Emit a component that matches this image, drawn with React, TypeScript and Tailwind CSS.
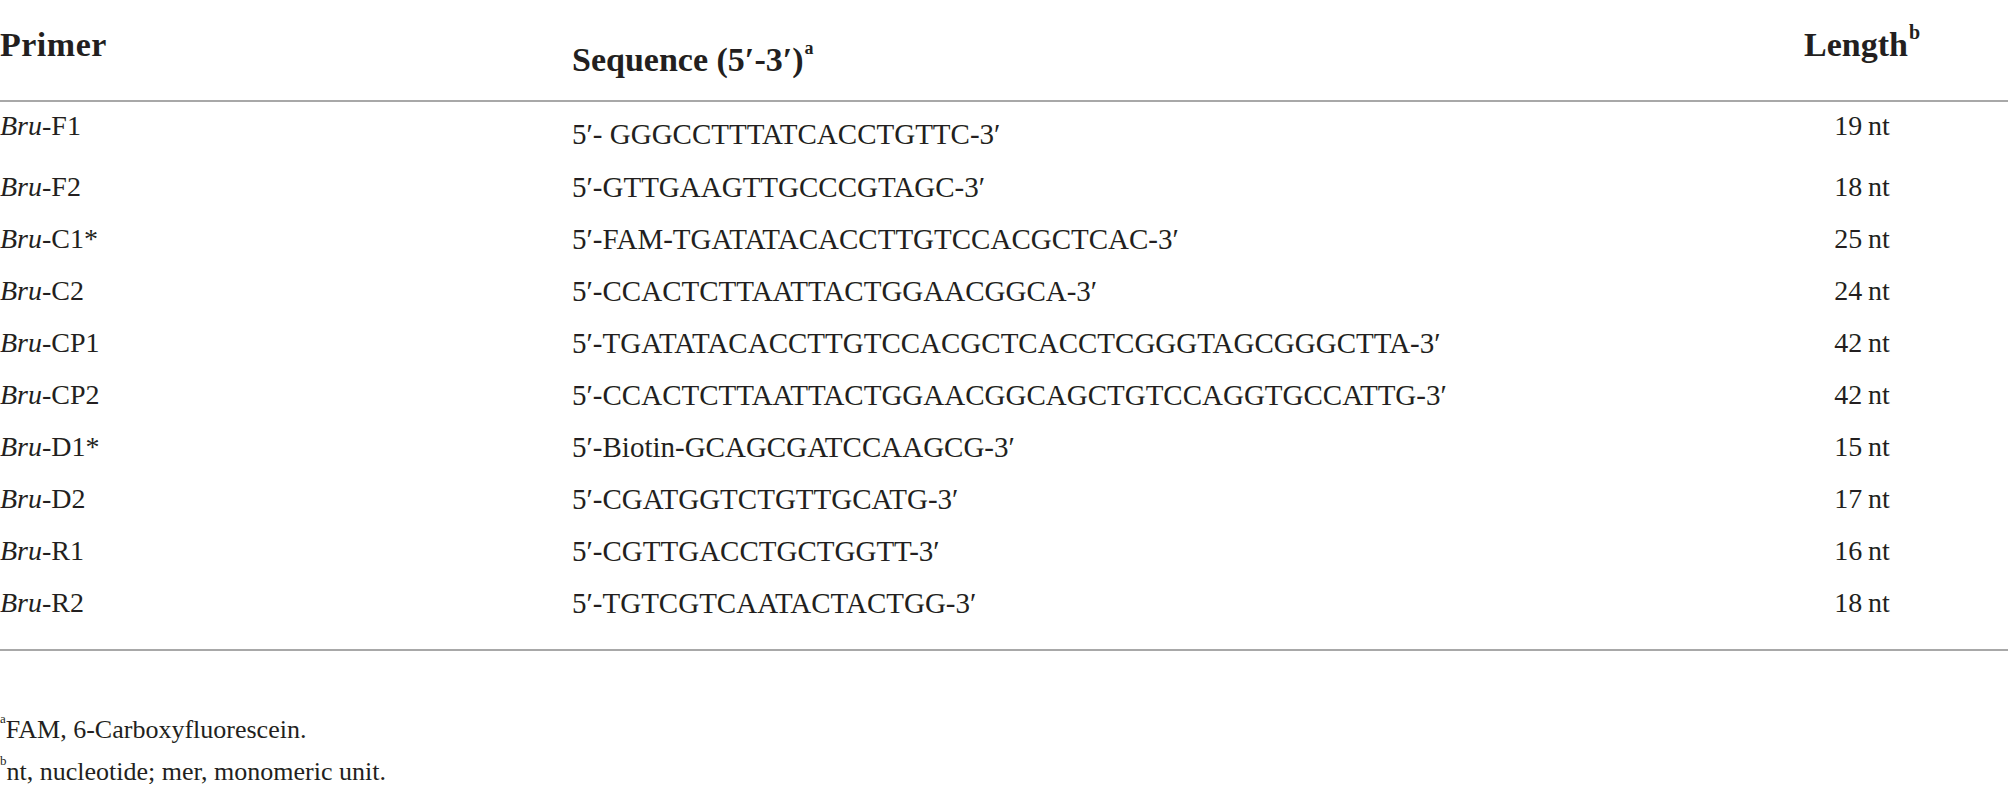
import React from "react";

const rows: { name: string; seq: string; len: string }[] = [
  { name: "F1", seq: "5\u2032- GGGCCTTTATCACCTGTTC-3\u2032", len: "19" },
  { name: "F2", seq: "5\u2032-GTTGAAGTTGCCCGTAGC-3\u2032", len: "18" },
  { name: "C1*", seq: "5\u2032-FAM-TGATATACACCTTGTCCACGCTCAC-3\u2032", len: "25" },
  { name: "C2", seq: "5\u2032-CCACTCTTAATTACTGGAACGGCA-3\u2032", len: "24" },
  { name: "CP1", seq: "5\u2032-TGATATACACCTTGTCCACGCTCACCTCGGGTAGCGGGCTTA-3\u2032", len: "42" },
  { name: "CP2", seq: "5\u2032-CCACTCTTAATTACTGGAACGGCAGCTGTCCAGGTGCCATTG-3\u2032", len: "42" },
  { name: "D1*", seq: "5\u2032-Biotin-GCAGCGATCCAAGCG-3\u2032", len: "15" },
  { name: "D2", seq: "5\u2032-CGATGGTCTGTTGCATG-3\u2032", len: "17" },
  { name: "R1", seq: "5\u2032-CGTTGACCTGCTGGTT-3\u2032", len: "16" },
  { name: "R2", seq: "5\u2032-TGTCGTCAATACTACTGG-3\u2032", len: "18" },
];

export default function App() {
  return (
    <div
      className="w-[2008px] h-[794px] bg-white text-[#231f20] overflow-hidden"
      style={{ fontFamily: '"Liberation Serif", "Times New Roman", serif' }}
    >
      {/* Header */}
      <div className="grid grid-cols-[572px_1144px_292px] h-[100px] font-bold text-[34px] leading-[40px]">
        <div className="pt-[25px] tracking-[0.5px]">Primer</div>
        <div className="pt-[40px]">
          Sequence (5{"\u2032"}-3{"\u2032"})
          <sup className="text-[18px] font-bold align-[8px] ml-[1px]">a</sup>
        </div>
        <div className="pt-[25px] text-center">
          Length
          <sup className="text-[20px] font-bold align-[7px] ml-[1px]">b</sup>
        </div>
      </div>
      <div className="h-[2px] bg-[#a8a8a8]" />

      {/* Body */}
      <div className="text-[28px] leading-[34px]">
        {rows.map((r, i) => (
          <div
            key={r.name}
            className={
              i === 0
                ? "grid grid-cols-[572px_1144px_292px] h-[62px] pt-[7px]"
                : "grid grid-cols-[572px_1144px_292px] h-[52px] pt-[6px]"
            }
          >
            <div>
              <i>Bru</i>-{r.name}
            </div>
            <div className={i === 0 ? "pt-[8px] text-[29px]" : "text-[29px]"}>{r.seq}</div>
            <div className="text-center">
              {r.len}
              {"\u2009"}nt
            </div>
          </div>
        ))}
      </div>
      <div className="mt-[17px] h-[2px] bg-[#a8a8a8]" />

      {/* Footnotes */}
      <div className="mt-[58px] text-[26px] leading-[42px]">
        <div>
          <sup className="text-[13px] align-[9px]">a</sup>FAM, 6-Carboxyfluorescein.
        </div>
        <div>
          <sup className="text-[13px] align-[9px]">b</sup>nt, nucleotide; mer, monomeric unit.
        </div>
      </div>
    </div>
  );
}
